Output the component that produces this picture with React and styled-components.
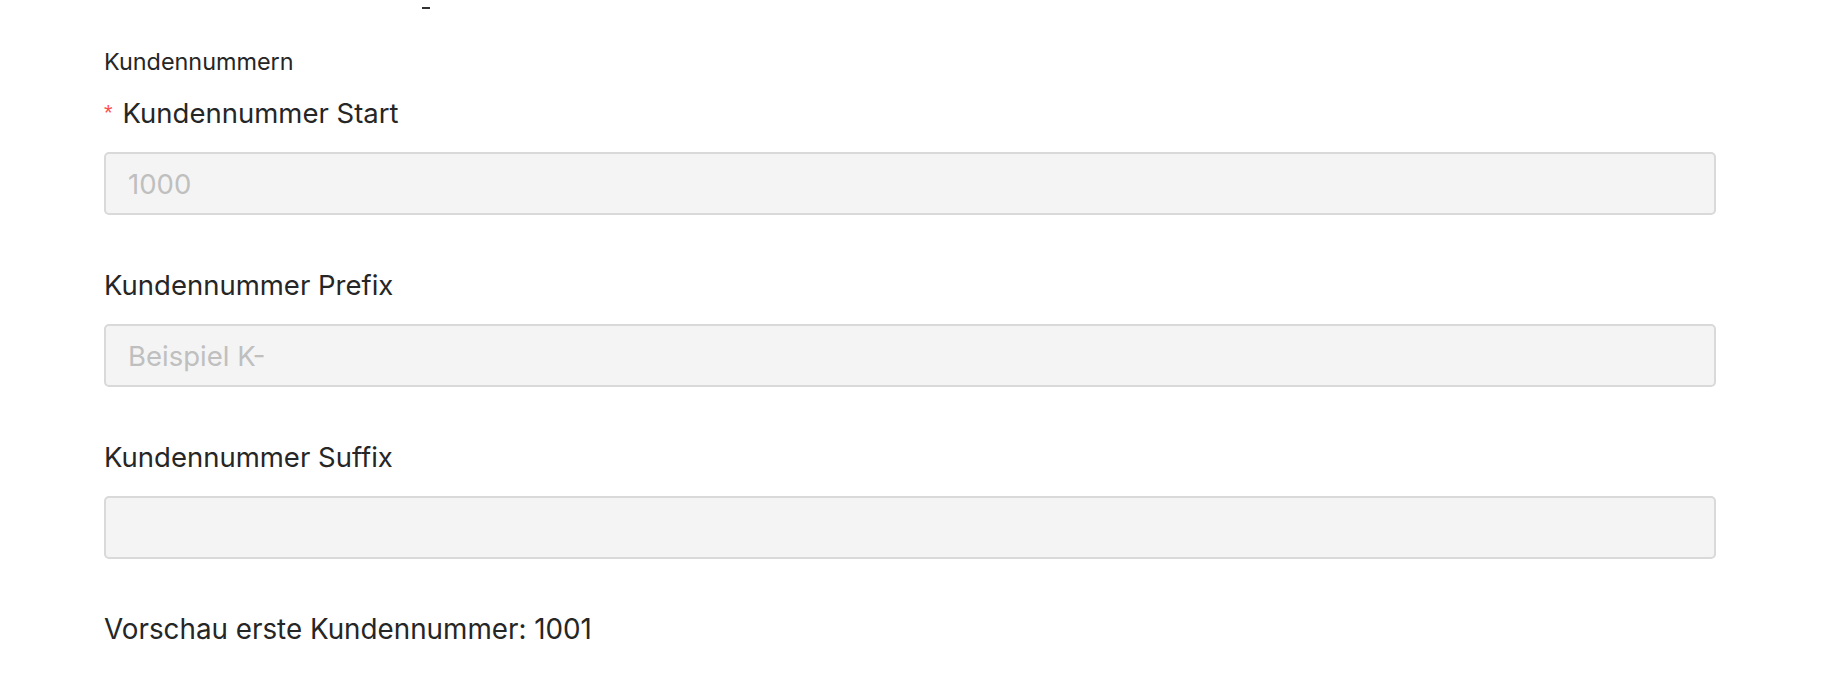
import styled, { createGlobalStyle } from "styled-components";

const GlobalStyle = createGlobalStyle`
  * { box-sizing: border-box; }
  body {
    margin: 0;
    background: #fff;
    font-family: Inter, "Noto Sans", sans-serif;
    color: #262626;
  }
`;

const Page = styled.div`
  padding: 0 122px 0 104px;
  height: 680px;
  overflow: hidden;
`;

const Remnant = styled.div`
  width: 8px;
  height: 2px;
  margin: 7px 0 0 318px;
  background: #333;
`;

const SectionTitle = styled.h3`
  margin: 36px 0 0;
  font-size: 23.4px;
  font-weight: 400;
  line-height: 34px;
`;

const Field = styled.div`
  margin-top: ${(p) => p.$top || 0}px;
`;

const Label = styled.label`
  display: flex;
  align-items: center;
  height: 44px;
  font-size: 27.5px;
  font-weight: 400;
`;

const Required = styled.span`
  color: #ff4d4f;
  font-size: 22px;
  margin-right: 10px;
  font-family: "Liberation Sans", sans-serif;
`;

const Input = styled.input`
  display: block;
  width: 100%;
  height: 63px;
  margin-top: 17px;
  padding: 0 22px;
  border: 2px solid #d9d9d9;
  border-radius: 5px;
  background: #f4f4f4;
  font: inherit;
  font-size: 27.5px;
  color: #262626;
  outline: none;
  &::placeholder {
    color: #bfbfbf;
  }
`;

const Preview = styled.p`
  margin: 50px 0 0;
  font-size: 27.8px;
  line-height: 40px;
`;

const fields = [
  { label: "Kundennummer Start", placeholder: "1000", required: true },
  { label: "Kundennummer Prefix", placeholder: "Beispiel K-" },
  { label: "Kundennummer Suffix", placeholder: "" },
];

export default function App() {
  return (
    <>
      <GlobalStyle />
      <Page>
        <Remnant />
        <SectionTitle>Kundennummern</SectionTitle>
        {fields.map((f, i) => (
          <Field key={f.label} $top={i === 0 ? 12 : 48}>
            <Label>
              {f.required && <Required>*</Required>}
              {f.label}
            </Label>
            <Input disabled placeholder={f.placeholder} />
          </Field>
        ))}
        <Preview>Vorschau erste Kundennummer: 1001</Preview>
      </Page>
    </>
  );
}
